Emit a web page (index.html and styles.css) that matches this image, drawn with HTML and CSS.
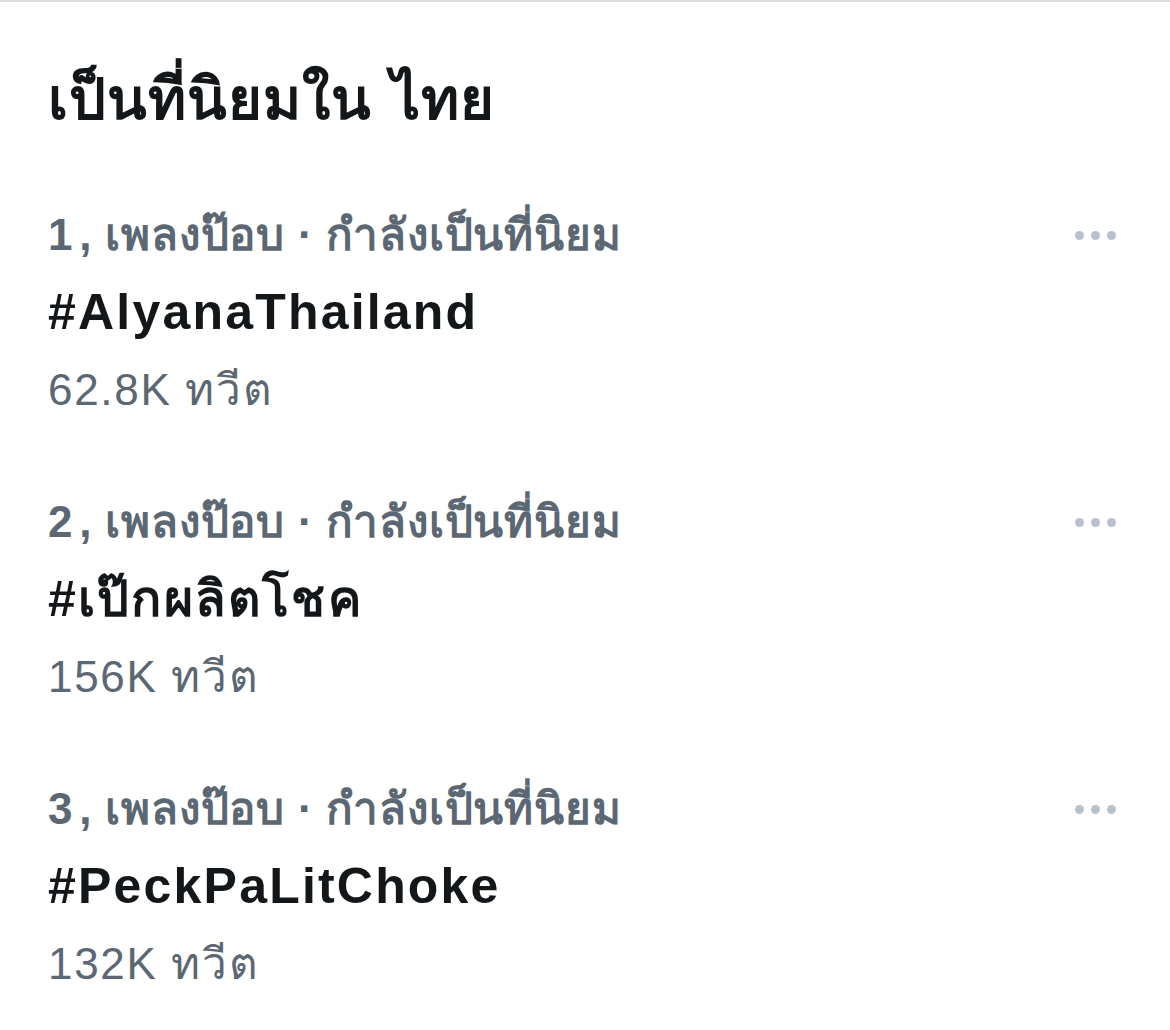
FILE: index.html
```html
<!DOCTYPE html>
<html lang="th">
<head>
<meta charset="utf-8">
<link rel="stylesheet" href="styles.css">
</head>
<body>
<div class="page">
  <h1 class="heading">เป็นที่นิยมใน ไทย</h1>
  <div class="list">
    <div class="trend">
      <div class="trend-body">
        <div class="meta"><span class="rank">1</span>, เพลงป๊อบ · กำลังเป็นที่นิยม</div>
        <div class="title">#AlyanaThailand</div>
        <div class="count">62.8K ทวีต</div>
      </div>
      <div class="more"><span></span><span></span><span></span></div>
    </div>
    <div class="trend">
      <div class="trend-body">
        <div class="meta"><span class="rank">2</span>, เพลงป๊อบ · กำลังเป็นที่นิยม</div>
        <div class="title">#เป๊กผลิตโชค</div>
        <div class="count">156K ทวีต</div>
      </div>
      <div class="more"><span></span><span></span><span></span></div>
    </div>
    <div class="trend">
      <div class="trend-body">
        <div class="meta"><span class="rank">3</span>, เพลงป๊อบ · กำลังเป็นที่นิยม</div>
        <div class="title">#PeckPaLitChoke</div>
        <div class="count">132K ทวีต</div>
      </div>
      <div class="more"><span></span><span></span><span></span></div>
    </div>
  </div>
</div>
</body>
</html>
```
FILE: styles.css
```css
html, body {
  margin: 0;
  padding: 0;
  background: #ffffff;
}
body {
  font-family: "Liberation Sans", "Noto Sans", sans-serif;
  border-top: 2px solid #dadcde;
}
.page {
  padding: 55px 48px 0 48px;
}
.heading {
  margin: 0;
  font-size: 58px;
  font-weight: 700;
  color: #14171a;
  line-height: 84px;
  letter-spacing: 1px;
  word-spacing: 2px;
}
.list {
  margin-top: 56px;
  display: flex;
  flex-direction: column;
  gap: 55px;
}
.trend {
  display: flex;
  justify-content: space-between;
  align-items: flex-start;
}
.trend-body {
  display: flex;
  flex-direction: column;
}
.meta {
  font-size: 44px;
  line-height: 76px;
  color: #5b6772;
  font-weight: 700;
  letter-spacing: 0.8px;
}
.rank {
  font-weight: 700;
  margin-right: 6px;
}
.title {
  font-size: 50px;
  line-height: 78px;
  color: #14171a;
  font-weight: 700;
  letter-spacing: 2.2px;
}
.count {
  font-size: 44px;
  line-height: 78px;
  color: #5b6772;
  letter-spacing: 1.7px;
}
.more {
  display: flex;
  gap: 7px;
  margin-top: 34px;
  margin-right: 6px;
}
.more span {
  width: 9px;
  height: 9px;
  border-radius: 50%;
  background: #b7c2cc;
}
```
